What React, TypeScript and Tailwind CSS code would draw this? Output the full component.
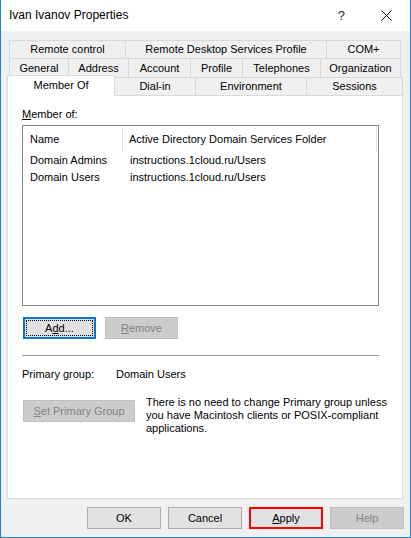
import React from 'react';

const font = { fontFamily: '"Segoe UI", "Liberation Sans", Arial, sans-serif' };

const rowOne = [
  { label: 'Remote control', w: 'w-[116px]' },
  { label: 'Remote Desktop Services Profile', w: 'w-[201px]' },
  { label: 'COM+', w: 'w-[75px]' },
];

const rowTwo = [
  { label: 'General', w: 'w-[59px]' },
  { label: 'Address', w: 'w-[60px]' },
  { label: 'Account', w: 'w-[62px]' },
  { label: 'Profile', w: 'w-[52px]' },
  { label: 'Telephones', w: 'w-[78px]' },
  { label: 'Organization', w: 'w-[81px]' },
];

const rowThree = [
  { label: 'Dial-in', w: 'w-[81px]' },
  { label: 'Environment', w: 'w-[111px]' },
  { label: 'Sessions', w: 'w-[96px]' },
];

const groups = [
  { name: 'Domain Admins', folder: 'instructions.1cloud.ru/Users' },
  { name: 'Domain Users', folder: 'instructions.1cloud.ru/Users' },
];

function Tab({ label, w, last }: { label: string; w: string; last?: boolean }) {
  return (
    <div
      className={`${w} flex items-center justify-center border-t border-l border-[#d9d9d9] bg-[#f0f0f0] ${
        last ? 'border-r' : ''
      }`}
    >
      {label}
    </div>
  );
}

function DisabledButton({ children, w }: { children: React.ReactNode; w: string }) {
  return (
    <div className={`${w} h-[22px] flex items-center justify-center border border-[#bfbfbf] bg-[#cccccc] text-[#838383]`}>
      {children}
    </div>
  );
}

export default function App() {
  return (
    <div
      style={font}
      className="w-[411px] h-[538px] flex flex-col border-l border-r border-b border-[#1883d7] bg-[#f0f0f0] text-[11px] text-black leading-[13px] overflow-hidden"
    >
      {/* title bar */}
      <div className="h-[31px] shrink-0 bg-white flex items-center pl-[8px] pr-[18px]">
        <span className="text-[12px] flex-1">Ivan Ivanov Properties</span>
        <span className="text-[13px] mr-[36px] text-[#222]">?</span>
        <svg width="11" height="11" viewBox="0 0 11 11">
          <path d="M0.5 0.5 L10.5 10.5 M10.5 0.5 L0.5 10.5" stroke="#111" strokeWidth="1" />
        </svg>
      </div>

      {/* tabs */}
      <div className="flex flex-col pt-[9px]">
        <div className="flex h-[18px] ml-[8px]">
          {rowOne.map((t, i) => (
            <Tab key={t.label} {...t} last={i === rowOne.length - 1} />
          ))}
        </div>
        <div className="flex h-[19px] ml-[8px]">
          {rowTwo.map((t, i) => (
            <Tab key={t.label} {...t} last={i === rowTwo.length - 1} />
          ))}
        </div>
        <div className="flex h-[18px] ml-[6px]">
          <div className="relative z-10 -mt-[2px] h-[21px] w-[108px] flex justify-center pt-[3px] bg-white border-t border-l border-r border-[#d9d9d9]">
            Member Of
          </div>
          {rowThree.map((t) => (
            <div
              key={t.label}
              className={`${t.w} flex items-center justify-center border-t border-r border-[#d9d9d9] bg-[#f0f0f0]`}
            >
              {t.label}
            </div>
          ))}
        </div>
      </div>

      {/* panel */}
      <div className="ml-[6px] w-[396px] h-[404px] border border-[#d9d9d9] bg-white flex flex-col pl-[14px] pt-[12px]">
        <div>
          <span className="underline">M</span>ember of:
        </div>

        <div className="mt-[4px] w-[357px] h-[181px] border border-[#828790] flex flex-col">
          <div className="h-[26px] flex items-center">
            <div className="w-[100px] pl-[7px] h-full flex items-center border-r border-[#e5e5e5]">Name</div>
            <div className="w-[254px] pl-[6px] h-full flex items-center border-r border-[#e5e5e5]">
              Active Directory Domain Services Folder
            </div>
          </div>
          {groups.map((g) => (
            <div key={g.name} className="h-[17px] flex items-center">
              <div className="w-[100px] pl-[7px]">{g.name}</div>
              <div className="pl-[7px]">{g.folder}</div>
            </div>
          ))}
        </div>

        <div className="flex gap-[9px] mt-[11px] ml-[1px]">
          <div className="w-[73px] h-[22px] border-2 border-[#0078d7] bg-[#e1e1e1] p-[1px]">
            <div className="w-full h-full border border-dotted border-black flex items-center justify-center">
              A<span className="underline">d</span>d...
            </div>
          </div>
          <DisabledButton w="w-[73px]">
            <span className="underline">R</span>emove
          </DisabledButton>
        </div>

        <div className="mt-[16px] w-[357px] h-px bg-[#a0a0a0]" />

        <div className="flex mt-[12px]">
          <div className="w-[94px]">Primary group:</div>
          <div>Domain Users</div>
        </div>

        <div className="flex mt-[15px] ml-[1px]">
          <div className="mt-[4px]">
            <DisabledButton w="w-[112px]">
              <span className="underline">S</span>et Primary Group
            </DisabledButton>
          </div>
          <div className="ml-[11px]">
            There is no need to change Primary group unless
            <br />
            you have Macintosh clients or POSIX-compliant
            <br />
            applications.
          </div>
        </div>
      </div>

      {/* dialog buttons */}
      <div className="flex justify-end gap-[7px] pr-[6px] mt-[8px]">
        <div className="w-[74px] h-[22px] flex items-center justify-center border border-[#adadad] bg-[#e1e1e1]">OK</div>
        <div className="w-[74px] h-[22px] flex items-center justify-center border border-[#adadad] bg-[#e1e1e1]">
          Cancel
        </div>
        <div className="relative w-[74px] h-[22px] flex items-center justify-center border border-[#adadad] bg-[#e1e1e1]">
          <span>
            <span className="underline">A</span>pply
          </span>
          <div className="absolute -inset-[1px] border-2 border-[#ff0000]" />
        </div>
        <DisabledButton w="w-[74px]">Help</DisabledButton>
      </div>
    </div>
  );
}
